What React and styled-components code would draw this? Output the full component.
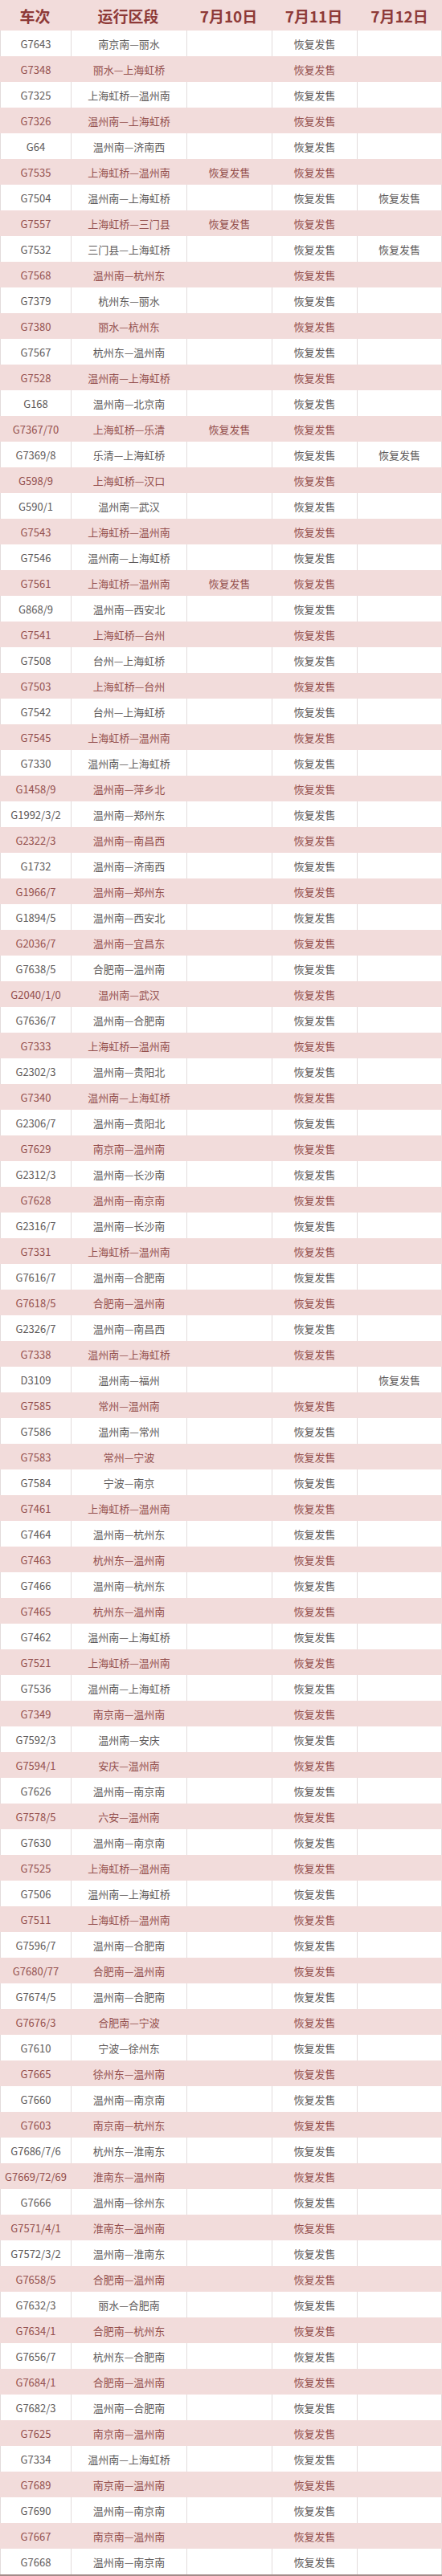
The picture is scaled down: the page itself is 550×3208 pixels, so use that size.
import React from "react";
import styled, { createGlobalStyle } from "styled-components";

const GlobalStyle = createGlobalStyle`
  html, body {
    margin: 0;
    padding: 0;
    background: #ffffff;
  }
`;

const SALE = "恢复发售";

// 车次, 运行区段, 7月10日, 7月11日, 7月12日
const trains = [
  ["G7643", "南京南—丽水", 0, 1, 0],
  ["G7348", "丽水—上海虹桥", 0, 1, 0],
  ["G7325", "上海虹桥—温州南", 0, 1, 0],
  ["G7326", "温州南—上海虹桥", 0, 1, 0],
  ["G64", "温州南—济南西", 0, 1, 0],
  ["G7535", "上海虹桥—温州南", 1, 1, 0],
  ["G7504", "温州南—上海虹桥", 0, 1, 1],
  ["G7557", "上海虹桥—三门县", 1, 1, 0],
  ["G7532", "三门县—上海虹桥", 0, 1, 1],
  ["G7568", "温州南—杭州东", 0, 1, 0],
  ["G7379", "杭州东—丽水", 0, 1, 0],
  ["G7380", "丽水—杭州东", 0, 1, 0],
  ["G7567", "杭州东—温州南", 0, 1, 0],
  ["G7528", "温州南—上海虹桥", 0, 1, 0],
  ["G168", "温州南—北京南", 0, 1, 0],
  ["G7367/70", "上海虹桥—乐清", 1, 1, 0],
  ["G7369/8", "乐清—上海虹桥", 0, 1, 1],
  ["G598/9", "上海虹桥—汉口", 0, 1, 0],
  ["G590/1", "温州南—武汉", 0, 1, 0],
  ["G7543", "上海虹桥—温州南", 0, 1, 0],
  ["G7546", "温州南—上海虹桥", 0, 1, 0],
  ["G7561", "上海虹桥—温州南", 1, 1, 0],
  ["G868/9", "温州南—西安北", 0, 1, 0],
  ["G7541", "上海虹桥—台州", 0, 1, 0],
  ["G7508", "台州—上海虹桥", 0, 1, 0],
  ["G7503", "上海虹桥—台州", 0, 1, 0],
  ["G7542", "台州—上海虹桥", 0, 1, 0],
  ["G7545", "上海虹桥—温州南", 0, 1, 0],
  ["G7330", "温州南—上海虹桥", 0, 1, 0],
  ["G1458/9", "温州南—萍乡北", 0, 1, 0],
  ["G1992/3/2", "温州南—郑州东", 0, 1, 0],
  ["G2322/3", "温州南—南昌西", 0, 1, 0],
  ["G1732", "温州南—济南西", 0, 1, 0],
  ["G1966/7", "温州南—郑州东", 0, 1, 0],
  ["G1894/5", "温州南—西安北", 0, 1, 0],
  ["G2036/7", "温州南—宜昌东", 0, 1, 0],
  ["G7638/5", "合肥南—温州南", 0, 1, 0],
  ["G2040/1/0", "温州南—武汉", 0, 1, 0],
  ["G7636/7", "温州南—合肥南", 0, 1, 0],
  ["G7333", "上海虹桥—温州南", 0, 1, 0],
  ["G2302/3", "温州南—贵阳北", 0, 1, 0],
  ["G7340", "温州南—上海虹桥", 0, 1, 0],
  ["G2306/7", "温州南—贵阳北", 0, 1, 0],
  ["G7629", "南京南—温州南", 0, 1, 0],
  ["G2312/3", "温州南—长沙南", 0, 1, 0],
  ["G7628", "温州南—南京南", 0, 1, 0],
  ["G2316/7", "温州南—长沙南", 0, 1, 0],
  ["G7331", "上海虹桥—温州南", 0, 1, 0],
  ["G7616/7", "温州南—合肥南", 0, 1, 0],
  ["G7618/5", "合肥南—温州南", 0, 1, 0],
  ["G2326/7", "温州南—南昌西", 0, 1, 0],
  ["G7338", "温州南—上海虹桥", 0, 1, 0],
  ["D3109", "温州南—福州", 0, 0, 1],
  ["G7585", "常州—温州南", 0, 1, 0],
  ["G7586", "温州南—常州", 0, 1, 0],
  ["G7583", "常州—宁波", 0, 1, 0],
  ["G7584", "宁波—南京", 0, 1, 0],
  ["G7461", "上海虹桥—温州南", 0, 1, 0],
  ["G7464", "温州南—杭州东", 0, 1, 0],
  ["G7463", "杭州东—温州南", 0, 1, 0],
  ["G7466", "温州南—杭州东", 0, 1, 0],
  ["G7465", "杭州东—温州南", 0, 1, 0],
  ["G7462", "温州南—上海虹桥", 0, 1, 0],
  ["G7521", "上海虹桥—温州南", 0, 1, 0],
  ["G7536", "温州南—上海虹桥", 0, 1, 0],
  ["G7349", "南京南—温州南", 0, 1, 0],
  ["G7592/3", "温州南—安庆", 0, 1, 0],
  ["G7594/1", "安庆—温州南", 0, 1, 0],
  ["G7626", "温州南—南京南", 0, 1, 0],
  ["G7578/5", "六安—温州南", 0, 1, 0],
  ["G7630", "温州南—南京南", 0, 1, 0],
  ["G7525", "上海虹桥—温州南", 0, 1, 0],
  ["G7506", "温州南—上海虹桥", 0, 1, 0],
  ["G7511", "上海虹桥—温州南", 0, 1, 0],
  ["G7596/7", "温州南—合肥南", 0, 1, 0],
  ["G7680/77", "合肥南—温州南", 0, 1, 0],
  ["G7674/5", "温州南—合肥南", 0, 1, 0],
  ["G7676/3", "合肥南—宁波", 0, 1, 0],
  ["G7610", "宁波—徐州东", 0, 1, 0],
  ["G7665", "徐州东—温州南", 0, 1, 0],
  ["G7660", "温州南—南京南", 0, 1, 0],
  ["G7603", "南京南—杭州东", 0, 1, 0],
  ["G7686/7/6", "杭州东—淮南东", 0, 1, 0],
  ["G7669/72/69", "淮南东—温州南", 0, 1, 0],
  ["G7666", "温州南—徐州东", 0, 1, 0],
  ["G7571/4/1", "淮南东—温州南", 0, 1, 0],
  ["G7572/3/2", "温州南—淮南东", 0, 1, 0],
  ["G7658/5", "合肥南—温州南", 0, 1, 0],
  ["G7632/3", "丽水—合肥南", 0, 1, 0],
  ["G7634/1", "合肥南—杭州东", 0, 1, 0],
  ["G7656/7", "杭州东—合肥南", 0, 1, 0],
  ["G7684/1", "合肥南—温州南", 0, 1, 0],
  ["G7682/3", "温州南—合肥南", 0, 1, 0],
  ["G7625", "南京南—温州南", 0, 1, 0],
  ["G7334", "温州南—上海虹桥", 0, 1, 0],
  ["G7689", "南京南—温州南", 0, 1, 0],
  ["G7690", "温州南—南京南", 0, 1, 0],
  ["G7667", "南京南—温州南", 0, 1, 0],
  ["G7668", "温州南—南京南", 0, 1, 0],
];

const columns = "87px 143px 105px 105px 1fr";

const Table = styled.div`
  width: 550px;
  background: #f2dcdb;
  border-bottom: 2px solid #a48c8a;
  font-family: "Noto Sans CJK SC", "Noto Sans", sans-serif;
`;

const HeadRow = styled.div`
  display: grid;
  grid-template-columns: ${columns};
  column-gap: 1px;
  height: 38px;
  background: #f2dcdb;
`;

const HeadCell = styled.div`
  display: flex;
  align-items: center;
  justify-content: center;
  font-size: 19px;
  font-weight: 700;
  color: #8e3a38;
`;

const Row = styled.div`
  display: grid;
  grid-template-columns: ${columns};
  column-gap: 1px;
  height: 32px;
  padding: 0 1px;
  background: ${p => (p.$shaded ? "#f2dcdb" : "#e2dcdc")};
`;

const Cell = styled.div`
  display: flex;
  align-items: center;
  justify-content: center;
  font-size: 13px;
  white-space: nowrap;
  background: ${p => (p.$shaded ? "#f2dcdb" : "#ffffff")};
  color: ${p => (p.$shaded ? "#94504e" : "#5e5a5a")};
`;

export default function App() {
  return (
    <>
      <GlobalStyle />
      <Table>
        <HeadRow>
          <HeadCell>车次</HeadCell>
          <HeadCell>运行区段</HeadCell>
          <HeadCell>7月10日</HeadCell>
          <HeadCell>7月11日</HeadCell>
          <HeadCell>7月12日</HeadCell>
        </HeadRow>
        {trains.map(([code, route, d10, d11, d12], i) => {
          const shaded = i % 2 === 1;
          return (
            <Row key={code} $shaded={shaded}>
              <Cell $shaded={shaded}>{code}</Cell>
              <Cell $shaded={shaded}>{route}</Cell>
              <Cell $shaded={shaded}>{d10 ? SALE : ""}</Cell>
              <Cell $shaded={shaded}>{d11 ? SALE : ""}</Cell>
              <Cell $shaded={shaded}>{d12 ? SALE : ""}</Cell>
            </Row>
          );
        })}
      </Table>
    </>
  );
}
